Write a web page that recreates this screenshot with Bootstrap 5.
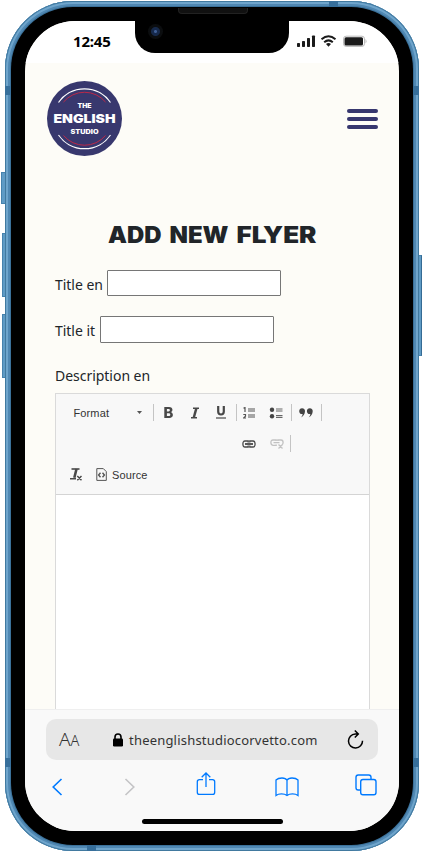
<!DOCTYPE html>
<html lang="en">
<head>
<meta charset="utf-8">
<meta name="viewport" content="width=device-width, initial-scale=1">
<title>Add new flyer</title>
<link href="https://cdn.jsdelivr.net/npm/bootstrap@5.3.0/dist/css/bootstrap.min.css" rel="stylesheet">
<style>
body{width:423px;height:852px;overflow:hidden;background:#fff;font-family:"Noto Sans","Open Sans",sans-serif;color:#212529}
svg{display:block;flex:none}
.phone{width:414px;height:850px;margin:1px 0 0 5px;padding:6px;border-radius:68px;background:#4685b3;box-shadow:inset 0 0 0 1px #41799f,inset 0 0 0 3px #6fa5cc,inset 0 0 0 5px #5088b3,inset 0 0 2px 6px #386b92}
.bezel{padding:14px;border-radius:62px;background:#000;height:838px}
.screen{width:374px;height:810px;border-radius:50px;background:#fdfcf7;overflow:hidden}
.side{position:absolute;background:#5f9bc5;border:1px solid #4682ad;border-right-color:#356b94}
.band{position:absolute;background:#376f9b}
.notch{position:absolute;left:130px;top:19px;width:154px;height:33px;background:#000;border-radius:0 0 20px 20px}
.speaker{position:absolute;left:43px;top:-12px;width:70px;height:6px;border-radius:0 0 4px 4px;background:#111;border:1px solid #222;border-top:0}
.lens{position:absolute;left:13px;top:4px;width:15px;height:15px;border-radius:50%;background:radial-gradient(circle,#3f5f96 0 1px,#16294b 2px 4px,#0b0d0f 5px)}
.statusbar{height:42px;background:#fff;padding:0 32px 0 48px}
.clock{font-weight:700;font-size:15px;line-height:20px;color:#000;letter-spacing:-.2px;padding-bottom:2px}
.site-head{height:93px;padding:18px 21.5px 0 22px}
.burger{width:31px;gap:4.4px;padding-top:28px}
.burger span{height:3.8px;border-radius:2px;background:#37376f}
.page{padding:65px 29px 0 30px;height:553px}
.headline{margin:0;height:26px}
.field{font-size:14px;line-height:22px;letter-spacing:-.03px}
.field label{white-space:nowrap;padding-top:3px}
.title-en{margin-top:23px;height:26px}
.title-en label{width:48px}
.title-it{margin-top:20px;height:27px;margin-bottom:-1px}
.title-it label{width:41px}
.desc{margin-top:22px;padding-top:1px;margin-bottom:6px}
.field input{width:174px;height:26px;border:1px solid #767676;border-radius:1px;background:#fff;padding:0}
.title-it input{height:27px}
.editor{height:316px;border:1px solid #dadada;border-bottom:0;background:#fff}
.tools{height:101px;padding-top:3px;background:#f8f8f8;border-bottom:1px solid #d4d4d4;font:11px/14px "Liberation Sans",sans-serif;color:#333;letter-spacing:.12px}
.line{height:31px}
.second{padding-left:179px}
.third{padding-left:14px}
.page-icon{margin:0 5px 0 14px}
.tool{display:flex;align-items:center;justify-content:center;height:22px}
.w25{width:25px}.w26{width:26px}.w27{width:27px}.w28{width:28px}.w29{width:29px}
.shift{padding-right:2px}
.rule{width:1px;height:17px;background:#c4c4c4}
.format{width:97px;padding:0 11px 0 17.5px}
.safari{height:122px;background:#f9f9f9;border-top:1px solid #efefef;padding:9px 21px 0}
.address{height:41px;border-radius:10px;background:#e7e7e7;padding:0 14px 0 13px;color:#333}
.aa{font-size:19px;font-weight:300;line-height:24px;width:54px}
.aa small{font-size:14.5px}
.url{margin-left:6px;font-size:13px;line-height:20px;letter-spacing:.2px;white-space:nowrap}
.actions{height:52px;padding:2px 1px 0 5px}
.forward{margin-left:61px}
.share{margin-left:60px;margin-bottom:2px}
.book{margin-left:59px}
.home{width:141px;height:5px;border-radius:3px;background:#000;margin:7px auto 0}
</style>
<script src="https://cdn.jsdelivr.net/npm/bootstrap@5.3.0/dist/js/bootstrap.bundle.min.js"></script>
</head>
<body class="position-relative">
<div class="side" style="left:1px;top:172px;width:5px;height:32px"></div>
<div class="side" style="left:2px;top:233px;width:4px;height:64px"></div>
<div class="side" style="left:2px;top:314px;width:4px;height:64px"></div>
<div class="side" style="left:418px;top:255px;width:4px;height:101px"></div>
<div class="overflow-hidden">
<div class="phone position-relative">
 <div class="bezel">
  <div class="screen d-flex flex-column">
   <header class="statusbar d-flex align-items-center justify-content-between">
    <div class="clock">12:45</div>
    <svg width="70" height="14" viewBox="297 35 70 14" fill="#1b1b1b"><rect x="297" y="43" width="3" height="4" rx=".7"/><rect x="302" y="41" width="3" height="6" rx=".7"/><rect x="307" y="38" width="3" height="9" rx=".7"/><rect x="312" y="35.500" width="3" height="11.500" rx=".7"/><g fill="none" stroke="#1b1b1b" stroke-width="2"><path d="M321.500 39.300q7-6 14 0M324.200 42.200q4.300-3.600 8.600 0"/></g><path d="M326 44q2.500-1.800 5 0l-2.500 2.800z"/><rect x="343.500" y="36.200" width="21" height="10.200" rx="2.600" fill="#fff" stroke="#bbb"/><rect x="344.500" y="37.200" width="18.500" height="8.200" rx="1.500"/><path d="M365.500 39q2 2.200 0 4.500z" fill="#bbb"/></svg>
   </header>
   <div class="site-head d-flex justify-content-between">
    <svg width="75" height="75" viewBox="0 0 75 75"><circle cx="37.500" cy="37.500" r="37.500" fill="#38386e"/><g fill="none" stroke="#fff" stroke-width="1.200"><path d="M11.500 21.500A31.500 31.500 0 0 1 63.500 21.500M11.500 54A31.500 31.500 0 0 0 63.500 54"/><path d="M16.500 21A27.500 27.500 0 0 1 58.500 21M16.500 54.500A27.500 27.500 0 0 0 58.500 54.500" stroke="#bb2949" stroke-width="1"/></g><g fill="#fff" font-family="Inter,sans-serif" font-weight="900" text-anchor="middle"><text x="37.500" y="27" font-size="6.200" textLength="14" lengthAdjust="spacingAndGlyphs">THE</text><text x="37.500" y="41.500" font-size="12" textLength="62" lengthAdjust="spacingAndGlyphs">ENGLISH</text><text x="37.500" y="52.500" font-size="6.200" textLength="28" lengthAdjust="spacingAndGlyphs">STUDIO</text></g></svg>
    <div class="burger d-flex flex-column"><span></span><span></span><span></span></div>
   </div>
   <main class="page">
    <h1 class="headline"><svg width="315" height="26" fill="#212529" font-family="Inter,sans-serif" font-weight="900" font-size="22.500"><text y="21.600"><tspan x="53" textLength="53.500" lengthAdjust="spacingAndGlyphs">ADD</tspan> <tspan x="114.500" textLength="59" lengthAdjust="spacingAndGlyphs">NEW</tspan> <tspan x="181.500" textLength="80" lengthAdjust="spacingAndGlyphs">FLYER</tspan></text></svg></h1>
    <div class="field title-en d-flex align-items-center gap-1"><label for="en">Title en</label><input id="en" type="text"></div>
    <div class="field title-it d-flex align-items-center gap-1"><label for="it">Title it</label><input id="it" type="text"></div>
    <div class="field desc">Description en</div>
    <div class="editor">
     <div class="tools">
      <div class="line d-flex align-items-center">
       <div class="format d-flex align-items-center justify-content-between"><span>Format</span><svg width="5" height="3"><path d="M0 0h5L2.500 3z" fill="#555"/></svg></div>
       <div class="rule"></div>
       <div class="tool w29"><svg width="9" height="11" viewBox="0 0 9 11"><path fill="#484848" fill-rule="evenodd" d="M.3 0H5c4 0 4.400 4 1.800 5.100C10 6.200 9.500 11 5.300 11H.3zM2.900 2v2.400H4.500c1.800 0 1.800-2.400 0-2.400zM2.900 6.300V9h1.800c2.100 0 2.100-2.700 0-2.700z"/></svg></div>
       <div class="tool w25 shift"><svg width="10" height="12" viewBox="0 0 10 12"><path d="M3 1.300h6M1 10.700h6" stroke="#484848" stroke-width="1.500"/><path d="M6.300 1.500l-2.500 9" stroke="#484848" stroke-width="2.500"/></svg></div>
       <div class="tool w28 shift"><svg width="10" height="13" viewBox="0 0 10 13" fill="none" stroke="#484848"><path d="M2.200 0v5.500c0 4 5.600 4 5.600 0V0" stroke-width="2.200"/><path d="M0 12h10" stroke-width="1.200"/></svg></div>
       <div class="rule"></div>
       <div class="tool w26 shift"><svg width="12" height="12" viewBox="0 0 12 12" fill="none" stroke="#555"><path d="M5 2h7M5 4h7M5 8h7M5 10h7" stroke-width="1.200"/><path d="M.5 1.300L2 .5V5M.3 7.500h2.200v1.700L.5 11h2.500" stroke-width="1.200"/></svg></div>
       <div class="tool w28 shift"><svg width="14" height="12" viewBox="0 0 14 12"><circle cx="3" cy="2.700" r="2.200" fill="#444"/><circle cx="3" cy="9.200" r="2.200" fill="#444"/><path d="M7 2h6.500M7 4h6.500M7 8.500h6.500M7 10.300h6.500" stroke="#666" stroke-width="1.200"/></svg></div>
       <div class="rule"></div>
       <div class="tool w29 shift"><svg width="14" height="10" viewBox="0 0 14 10" fill="#444"><path id="quo" d="M3 .3c2.200 0 3 1.400 3 3 0 3-1.800 5.200-4.200 6.200C3 8.300 3.600 7.300 3.600 6 1.500 6.400.2 5 .2 3.200.2 1.500 1.400.3 3 .3z"/><use href="#quo" x="7.700"/></svg></div>
       <div class="rule"></div>
      </div>
      <div class="line second d-flex align-items-center">
       <div class="tool w28"><svg width="14" height="8" viewBox="0 0 14 8" fill="none" stroke="#484848" stroke-width="1.300"><path d="M6.200 2.500V1H3Q.9 1 .9 4T3 7h3.200V5.500M7.800 2.500V1H11q2.100 0 2.100 3T11 7H7.800V5.500"/><path d="M3 4h8" stroke-width="1.800"/></svg></div>
       <div class="tool w27"><svg width="14" height="10" viewBox="0 0 14 10" fill="none" stroke="#c2c2c2" stroke-width="1.300"><path d="M6.200 2V1H3Q.9 1 .9 3.500T3 6.300h3.200V5.500M7.800 2V1H11q2.100 0 2.100 2.500 0 1.500-1 2.200M3.500 3.600h6M8.500 5.500l4 4M12.500 5.500l-4 4"/></svg></div>
       <div class="rule"></div>
      </div>
      <div class="line third d-flex align-items-center">
       <svg width="12" height="13" viewBox="0 0 12 13" fill="none" stroke="#484848"><path d="M1.500 1H9.500" stroke-width="1.600"/><path d="M6.500 1L4.300 9.700" stroke-width="2.600"/><path d="M0 10.800h6M7.300 8l4.200 4.200M11.500 8l-4.200 4.200" stroke-width="1.500"/></svg>
       <svg class="page-icon" width="11" height="13" viewBox="0 0 11 13" fill="none" stroke="#555"><path d="M.8.6h6.500l3 3v8.800H.8z"/><path d="M4.500 4.800L2.600 7l1.900 2.200M6.500 4.800L8.400 7 6.500 9.200" stroke-width="1.400"/></svg>
       <span>Source</span>
      </div>
     </div>
    </div>
   </main>
   <footer class="safari">
    <div class="address d-flex align-items-center">
     <div class="aa">A<small>A</small></div>
     <svg width="10" height="14" viewBox="0 0 10 14"><rect y="5.500" width="10" height="8" rx="1.300"/><path d="M2 7V4q0-3 3-3t3 3v3" fill="none" stroke="#000" stroke-width="1.600"/></svg>
     <div class="url">theenglishstudiocorvetto.com</div>
     <svg class="ms-auto" width="17" height="20" viewBox="0 0 17 20" fill="none" stroke="#000" stroke-width="1.500"><path d="M10.500 4H8.300A7 7 0 1 0 15.500 10.800M7.800 .5l3.500 3.500-3.500 3.500"/></svg>
    </div>
    <div class="actions d-flex align-items-center">
     <svg width="12" height="18" viewBox="0 0 12 18" fill="none" stroke="#007aff" stroke-width="1.600"><path d="M10.500 1L2.200 9l8.300 8"/></svg>
     <svg class="forward" width="12" height="18" viewBox="0 0 12 18" fill="none" stroke="#c4c4c6" stroke-width="1.600"><path d="M1.500 1l8.300 8-8.300 8"/></svg>
     <svg class="share" width="20" height="28" viewBox="0 0 20 28" fill="none" stroke="#007aff" stroke-width="1.300"><path d="M7 7.600H3.500Q1.300 7.600 1.300 9.800v10.400q0 2.200 2.200 2.200h13q2.200 0 2.200-2.200V9.800q0-2.200-2.200-2.200H13M10 15V1.200M5.700 5.300L10 1l4.300 4.300"/></svg>
     <svg class="book" width="24" height="20" viewBox="0 0 24 20" fill="none" stroke="#007aff" stroke-width="1.300"><path d="M12 18.500V3.200Q10.800 1 7 1 3 1 1 3v15.500q2-1.600 5.500-1.600T12 18.500q2-1.600 5.500-1.600t5.500 1.600V3q-2-2-6-2-3.800 0-5 2.200"/></svg>
     <svg class="ms-auto" width="22" height="26" viewBox="0 0 22 26" fill="none" stroke="#007aff" stroke-width="1.400"><path d="M5.500 16H3.200Q1 16 1 13.800V3.200Q1 1 3.200 1h10.600Q16 1 16 3.200v2.300"/><rect x="5.700" y="5.500" width="15.300" height="15.300" rx="2.200"/></svg>
    </div>
    <div class="home"></div>
   </footer>
  </div>
 </div>
 <div class="notch"><div class="speaker"></div><div class="lens"></div></div>
 <div class="band" style="left:0;top:85px;width:6px;height:9px"></div>
 <div class="band" style="right:0;top:85px;width:6px;height:9px"></div>
 <div class="band" style="left:0;top:757px;width:6px;height:9px"></div>
 <div class="band" style="right:0;top:757px;width:6px;height:9px"></div>
 <div class="band" style="left:324px;top:0;width:9px;height:6px"></div>
 <div class="band" style="left:82px;bottom:0;width:9px;height:6px"></div>
</div>
</div>
</body>
</html>
